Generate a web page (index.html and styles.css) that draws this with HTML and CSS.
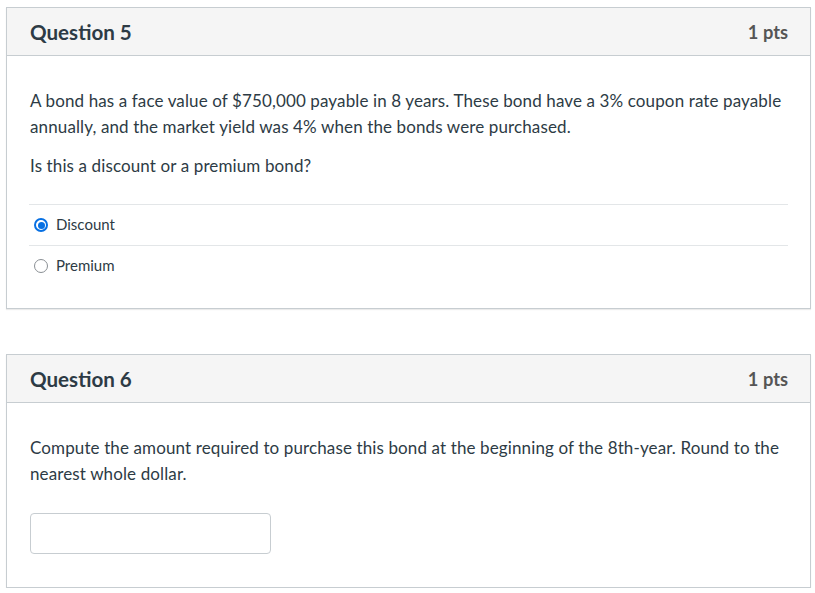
FILE: index.html
```html
<!DOCTYPE html>
<html>
<head>
<meta charset="utf-8">
<link rel="stylesheet" href="styles.css">
</head>
<body>
<div class="page">
  <div class="question">
    <div class="q-header">
      <span class="q-title">Question 5</span>
      <span class="q-pts">1 pts</span>
    </div>
    <div class="q-body">
      <p class="q-text">A bond has a face value of $750,000 payable in 8 years. These bond have a 3% coupon rate payable annually, and the market yield was 4% when the bonds were purchased.</p>
      <p class="q-text">Is this a discount or a premium bond?</p>
      <div class="answers">
        <div class="answer">
          <span class="radio checked"></span>
          <span class="label">Discount</span>
        </div>
        <div class="answer">
          <span class="radio"></span>
          <span class="label">Premium</span>
        </div>
      </div>
    </div>
  </div>

  <div class="question">
    <div class="q-header">
      <span class="q-title">Question 6</span>
      <span class="q-pts">1 pts</span>
    </div>
    <div class="q-body q-body2">
      <p class="q-text">Compute the amount required to purchase this bond at the beginning of the 8th-year. Round to the nearest whole dollar.</p>
      <div class="input-box"></div>
    </div>
  </div>
</div>
</body>
</html>
```

FILE: styles.css
```css
html, body {
  margin: 0;
  padding: 0;
  background: #ffffff;
}
body {
  font-family: Lato, "Open Sans", sans-serif;
  color: #2d3b45;
}
.page {
  padding: 7px 4px 0 6px;
  display: flex;
  flex-direction: column;
  gap: 45px;
}
.question {
  border: 1px solid #c7cdd1;
  box-shadow: 0 1px 1px rgba(0,0,0,0.08);
}
.q-header {
  background: #f5f5f5;
  border-bottom: 1px solid #c7cdd1;
  height: 47px;
  display: flex;
  align-items: center;
  justify-content: space-between;
  padding: 0 22px 0 23px;
}
.q-title {
  font-size: 20.6px;
  font-weight: 700;
  color: #2d3b45;
}
.q-pts {
  font-size: 18.3px;
  font-weight: 700;
  color: #555555;
}
.q-body {
  padding: 32px 22px 22px 22px;
}
.q-text {
  margin: 0 0 13px 1px;
  font-size: 17px;
  letter-spacing: 0.12px;
  line-height: 26px;
}
.answers {
  margin-top: 25px;
}
.answer {
  height: 40px;
  border-top: 1px solid #e3e6e8;
  display: flex;
  align-items: center;
  padding-left: 5px;
}
.radio {
  width: 12px;
  height: 12px;
  border: 1px solid #8a8f94;
  border-radius: 50%;
  box-sizing: content-box;
  flex: 0 0 auto;
  position: relative;
}
.radio.checked {
  border: 2px solid #0770e3;
  width: 10px;
  height: 10px;
}
.radio.checked::after {
  content: "";
  position: absolute;
  left: 1.5px;
  top: 1.5px;
  width: 7px;
  height: 7px;
  border-radius: 50%;
  background: #0770e3;
}
.label {
  font-size: 15px;
  line-height: 18px;
  margin-left: 8px;
  margin-top: -2px;
  color: #2d3b45;
}
.q-body2 {
  padding-bottom: 33px;
}
.q-body2 .q-text {
  margin-bottom: 27px;
}
.input-box {
  width: 239px;
  height: 39px;
  border: 1px solid #c7cdd1;
  border-radius: 4px;
  margin-left: 1px;
  margin-top: -1px;
}
```
